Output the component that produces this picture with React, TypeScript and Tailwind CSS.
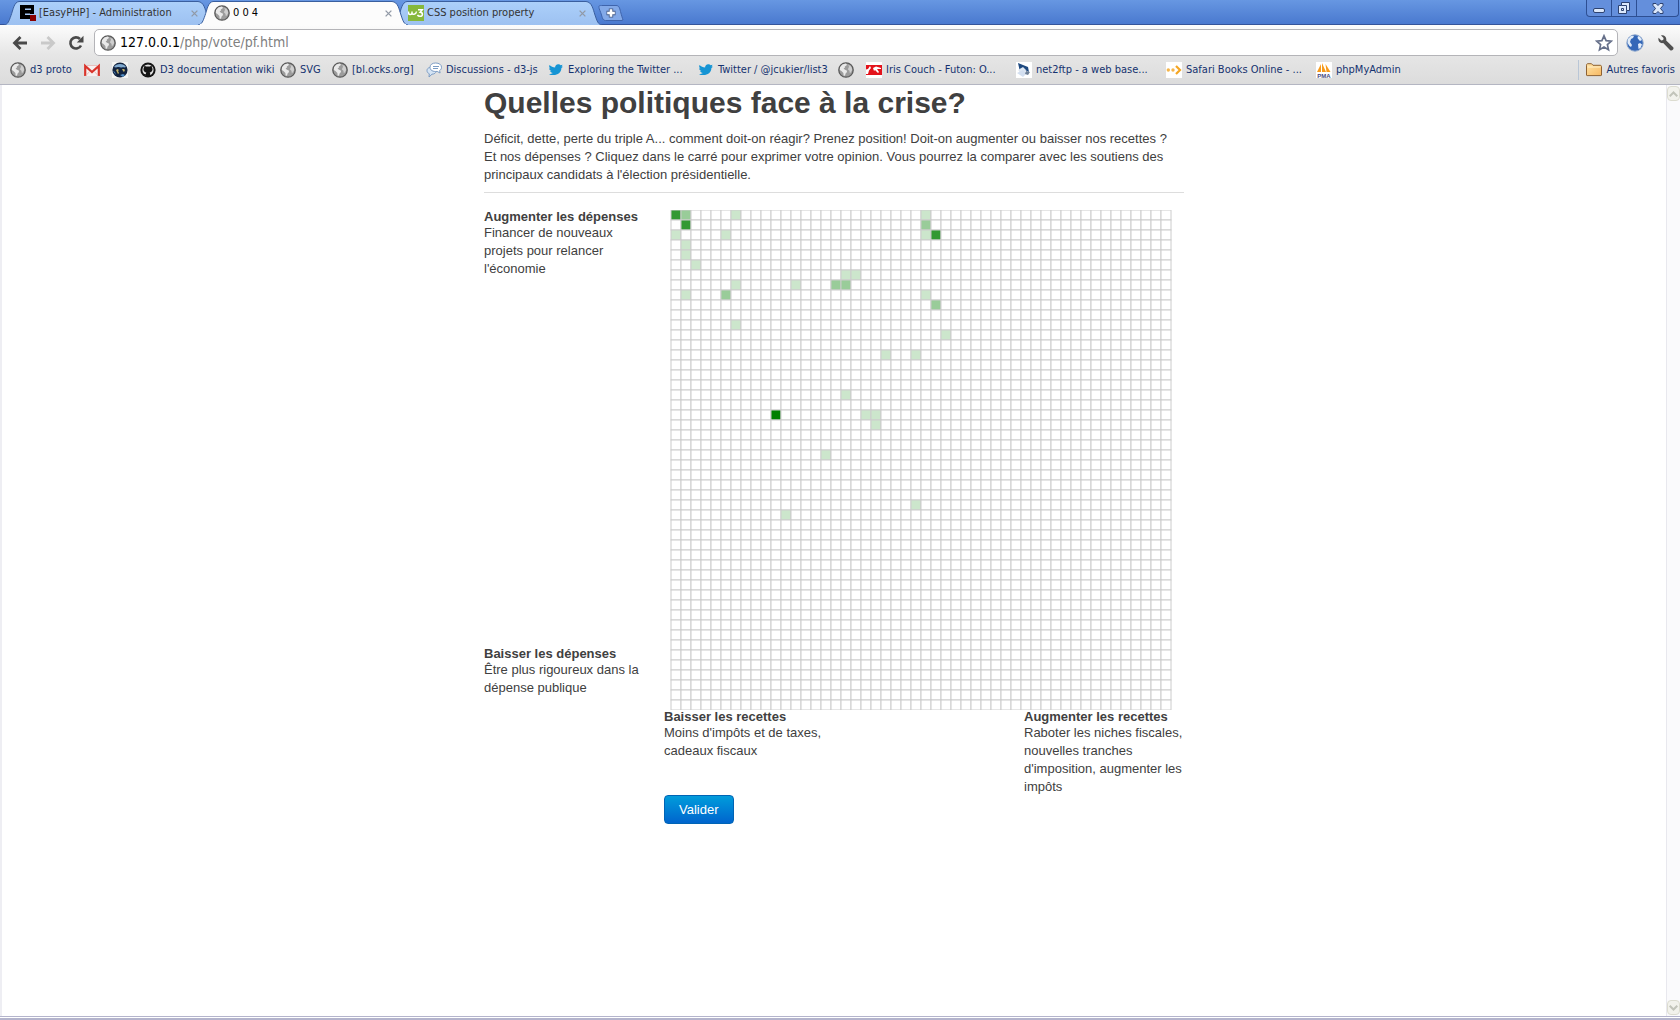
import React from "react";

const uiFont = "font-['DejaVu_Sans_Condensed','Noto_Sans',sans-serif]";

/* ---------- icons ---------- */

function Globe() {
  return (
    <svg viewBox="0 0 16 16" className="size-4 shrink-0" aria-hidden="true">
      <circle cx="8" cy="8" r="7.2" fill="#9c9c9c" stroke="#5a5a5a" strokeWidth="1.3" />
      <path d="M2 5.200 4.400 2.400 7.600 1.600 9 2.400 8.400 3.600 6.800 4.400 7 5.600 5.600 6.600 7 7.800 8.800 8.600 9 10 7.600 11.600 7 13.800 5.600 13.400 5.400 11 3.400 9 1.800 8z" fill="#e9e9e9" />
      <path d="M10.200 3.200 12.200 3.600 13.800 5.800 14.200 8 12.800 10.600 11.800 11 11.400 8.800 10 7.600 10.400 5.800 11.200 5z" fill="#cfcfcf" />
    </svg>
  );
}

function EasyPhpIcon() {
  return (
    <svg viewBox="0 0 16 16" className="size-4 shrink-0" aria-hidden="true">
      <path d="M0 0h14v9H5v1h5v4H0z" fill="#000" />
      <path d="M5 3.500h6v1.500H5zM5 8.500h5v1.500H5z" fill="#a5c8f5" />
      <rect x="10" y="10" width="6" height="6" fill="#8a0000" />
    </svg>
  );
}

function W3Icon() {
  return (
    <svg viewBox="0 0 16 16" className="size-4 shrink-0" aria-hidden="true">
      <rect width="16" height="16" fill="#86b83c" />
      <path d="M.5 6.500V8c0 2 3.500 2 3.500 0V6.500M4 8c0 2 4 2 4.500-1.500" fill="none" stroke="#fff" strokeWidth="1.500" />
      <path d="M10 4.700h4.200l-2 2.600c3 .2 3 4.200-.3 4-1.200 0-2-.6-2.400-1.400" fill="none" stroke="#fff" strokeWidth="1.600" />
    </svg>
  );
}

function GmailIcon() {
  return (
    <svg viewBox="0 0 16 16" className="size-4 shrink-0" aria-hidden="true">
      <rect x="0" y="3" width="16" height="11" fill="#f6f0f0" />
      <path d="M1.2 14V4L8 10l6.800-6v10" fill="none" stroke="#d9342b" strokeWidth="2.200" />
      <path d="M2 13.500 6 9M14 13.500 10 9M2 3.500h12" stroke="#e4b3b0" strokeWidth=".8" />
    </svg>
  );
}

function EarthIcon() {
  return (
    <svg viewBox="0 0 16 16" className="size-4 shrink-0" aria-hidden="true">
      <rect width="16" height="16" fill="#f4f4f2" />
      <circle cx="8" cy="8" r="7.600" fill="#12233f" />
      <path d="M2 5c2-4 10-4 12 0-1 1-3 0-4 .5S6 4 4 5.500z" fill="#7fa9cf" />
      <path d="M4 8l1.500-1L7 8l-1 1 1 2-1 1-1-2zM10 7l2 0 1 1-1 2-1-1z" fill="#c1b26a" />
      <path d="M1 9l2 1 1 3zM8 13l3-1 2 1-2 2z" fill="#4f8cc4" />
    </svg>
  );
}

function GithubIcon() {
  return (
    <svg viewBox="0 0 16 16" className="size-4 shrink-0" aria-hidden="true">
      <circle cx="8" cy="8" r="7.600" fill="#151515" />
      <circle cx="8" cy="8" r="5.600" fill="#e2e2e2" />
      <path d="M4.400 3.600 6 4.600h4l1.600-1 .4 2c1.200 2 .3 4.500-2.300 4.900.4.500.5 1 .5 1.700V15H5.900v-2c-1.500.2-2-.4-2.500-1.300 1 0 1.500.8 2.500.3 0-.6.100-1 .4-1.500C3.700 10.100 2.800 7.600 4 5.600z" fill="#151515" />
    </svg>
  );
}

function ChatIcon() {
  return (
    <svg viewBox="0 0 16 16" className="size-4 shrink-0" aria-hidden="true">
      <path d="M1 8.500c0-3 4-4 7-2.500s3 6-2 6.200L3 15l.3-3.200C1.800 11 1 10 1 8.500z" fill="#d5e4f4" stroke="#7c9cc4" />
      <path d="M4 5.300C4 2.500 6.500 1 9.700 1c3.300 0 5.800 1.600 5.800 4.300 0 1.600-.7 2.500-1.900 3.200l.5 2.500-3-1.600C7 9.900 4 8.300 4 5.300z" fill="#fff" stroke="#7c9cc4" />
      <path d="M7 4.500h6M7 6.500h5" stroke="#7c9cc4" />
    </svg>
  );
}

function TwitterIcon() {
  return (
    <svg viewBox="0 0 16 16" className="size-4 shrink-0" aria-hidden="true">
      <path d="M1.500 3c1.600 1.600 3.400 2.400 5.600 2.500C7 3.300 8.700 2 10.500 2.200c1 .1 1.600.5 2.100 1l2-.4-1 1.600 1.400.3-1.600 1.400C13.300 11 9.500 13.300 5 13.100c-1.600 0-3-.4-4-1.200 1.600 0 2.800-.3 3.800-1-1.400-.2-2.300-1-2.600-2l1.200-.1C2 8.500 1.200 7.600 1.200 6.300l1.200.3C1.200 5.600.9 4.300 1.500 3z" fill="#1594d4" />
    </svg>
  );
}

function CouchIcon() {
  return (
    <svg viewBox="0 0 16 16" className="size-4 shrink-0" aria-hidden="true">
      <rect width="16" height="16" fill="#fff" />
      <path d="M0 3h16v10H0z" fill="#e3131b" />
      <path d="M0 7.500 2 7 4 4 5 6 3 8.500 2 12 0 12zM7 6l3-1.500 5 1.500v1l-4 0L13 10l-1 1-3-3-1 1z" fill="#fff" />
    </svg>
  );
}

function FtpIcon() {
  return (
    <svg viewBox="0 0 16 16" className="size-4 shrink-0" aria-hidden="true">
      <rect width="16" height="16" fill="#fff" />
      <path d="M2 1 12 5l1 5-4-2-5 2z" fill="#1f4a80" />
      <path d="M2 8l5-3 3 3-5 3z" fill="#dfe8f3" />
      <path d="M1 11l6-3 4 3-4 4z" fill="#d3dff0" />
      <path d="M10 9l4 1-2 3-3-1z" fill="#6f8198" />
    </svg>
  );
}

function SafariIcon() {
  return (
    <svg viewBox="0 0 16 16" className="size-4 shrink-0" aria-hidden="true">
      <rect width="16" height="16" fill="#fff" />
      <circle cx="2.300" cy="8" r="1.700" fill="#f5b54a" />
      <circle cx="7" cy="8" r="1.700" fill="#f5b54a" />
      <path d="m10 4 4 4-4 4" fill="none" stroke="#f5a623" strokeWidth="2.200" />
    </svg>
  );
}

function PmaIcon() {
  return (
    <svg viewBox="0 0 16 16" className="size-4 shrink-0" aria-hidden="true">
      <rect width="16" height="16" fill="#fff" />
      <path d="M1 10 5 2v8zM6 10V1l4 9zM10.500 10 9.500 2l5 8z" fill="#f79a1a" />
      <text x="8" y="15.500" textAnchor="middle" fontSize="6" fontWeight="bold" fontFamily="Liberation Sans" fill="#47477d">PMA</text>
    </svg>
  );
}

function FolderIcon() {
  return (
    <svg viewBox="0 0 16 16" className="size-4 shrink-0" aria-hidden="true">
      <defs>
        <linearGradient id="folder" x1="0" y1="0" x2="1" y2="1">
          <stop offset="0" stopColor="#ffe3a6" />
          <stop offset="1" stopColor="#f6b862" />
        </linearGradient>
      </defs>
      <path d="M.5 13V3.200C.5 2.200 1 1.700 2 1.700h3.500l1.500 1.600h7c1 0 1.500.4 1.500 1.300V13c0 .4-.2.600-.6.600H1.100c-.4 0-.6-.2-.6-.6z" fill="url(#folder)" stroke="#8e6233" />
      <path d="M1.500 5h13" stroke="#fff0c9" />
    </svg>
  );
}

function BlueGlobe() {
  return (
    <svg viewBox="0 0 18 18" className="size-[18px]" aria-hidden="true">
      <circle cx="9" cy="9" r="8.200" fill="#3467b8" stroke="#8fa8cc" />
      <path d="M2 5 5 2 8 2 7 4 5 5 4 8 6 11 5 13 3.500 12 1.500 9z" fill="#dfeaf8" />
      <path d="M12 2 14 3 16 6 14 7 13 6 11.500 4zM12 10l2-1 2 1.500-1.500 3.500-2 1z" fill="#e3edfa" />
    </svg>
  );
}

/* ---------- browser frame ---------- */

function TabShape({ active }: { active: boolean }) {
  return (
    <svg viewBox="0 0 210 24" preserveAspectRatio="none" className="absolute inset-0 h-full w-full" aria-hidden="true">
      <defs>
        <linearGradient id="tabBlue" x1="0" y1="0" x2="0" y2="1">
          <stop offset="0" stopColor="#acd0fa" />
          <stop offset="1" stopColor="#9dc1f1" />
        </linearGradient>
      </defs>
      <path
        d="M0 24C4 23.500 5 20 7 14.500S10 1 15 .5H194C200 1 201 8 203 14S206 23.500 210 24"
        fill={active ? "#fcfcfc" : "url(#tabBlue)"}
        stroke="#3a5f9f"
      />
      {active && <path d="M2 24h206" stroke="#fcfcfc" strokeWidth="2" />}
    </svg>
  );
}

function Tab({ icon, title, active = false }: { icon: React.ReactNode; title: string; active?: boolean }) {
  return (
    <div className={active ? "relative z-10 -mr-4 h-6 w-[210px]" : "relative -mr-4 h-6 w-[210px]"}>
      <TabShape active={active} />
      <div className="relative flex h-6 items-center pr-3 pl-4">
        <button className={active ? "flex flex-1 items-center gap-[3px] text-black" : "flex flex-1 items-center gap-[3px] text-[#333]"}>
          {icon}
          <span className="whitespace-nowrap">{title}</span>
        </button>
        <button aria-label="Fermer l'onglet" className="flex size-4 items-center justify-center">
          <svg viewBox="0 0 8 8" className="size-[7px]" aria-hidden="true">
            <path d="m.7.700 6.600 6.600M7.300.700.700 7.300" stroke="#9199a6" strokeWidth="1.500" />
          </svg>
        </button>
      </div>
    </div>
  );
}

function TitleBar() {
  return (
    <div className="flex h-[25px] items-start border-b border-[#34549a] bg-linear-to-b from-[#6797e2] to-[#4a79cf] pl-1">
      <div className="flex pt-px">
        <Tab icon={<EasyPhpIcon />} title="[EasyPHP] - Administration" />
        <Tab icon={<Globe />} title="0 0 4" active />
        <Tab icon={<W3Icon />} title="CSS position property" />
      </div>
      <button aria-label="Nouvel onglet" className="mt-[5px] ml-3">
        <svg viewBox="0 0 26 16" className="h-4 w-[26px]" aria-hidden="true">
          <path d="M3.500.5H18c3 0 3.500 2 4.500 6s2 7 2.500 8.500c-.5.500-1 .5-2 .5H7.500c-2.500 0-3-2-4-5.500S1 4 1 2.500.5.500 3.500.5z" fill="#83a9e8" stroke="#3f64ac" />
          <path d="M8.500 8h9M13 3.500v9" stroke="#465c88" strokeWidth="4.400" />
          <path d="M9.200 8h7.600M13 4.200v7.600" stroke="#fff" strokeWidth="2.600" />
        </svg>
      </button>
      <div className="mr-px ml-auto flex h-[17px] divide-x divide-[#2d4f93] rounded-b border border-t-0 border-[#2d4f93] bg-[#648fdc]">
        <button aria-label="Réduire" className="flex w-[25px] items-center justify-center">
          <svg viewBox="0 0 12 12" className="size-3" aria-hidden="true">
            <rect x=".5" y="6.500" width="11" height="4" rx="1.500" fill="#dce8fb" stroke="#2d4270" />
          </svg>
        </button>
        <button aria-label="Restaurer" className="flex w-[25px] items-center justify-center">
          <svg viewBox="0 0 14 14" className="size-[14px]" aria-hidden="true">
            <path d="M4.500 1.500h8v8h-3v3h-8v-8h3z" fill="#dce8fb" stroke="#2d4270" />
            <path d="M4.500 4.500h5v5M4.500 7.500h2v2h-2z" fill="none" stroke="#2d4270" />
          </svg>
        </button>
        <button aria-label="Fermer" className="flex w-[41px] items-center justify-center">
          <svg viewBox="0 0 12 11" className="h-[11px] w-3" aria-hidden="true">
            <path d="M1 .5h3l2 2 2-2h3v2L8.500 5.500 11 8.500v2H8l-2-2-2 2H1v-2l2.500-3L1 2.500z" fill="#dce8fb" stroke="#2d4270" />
          </svg>
        </button>
      </div>
    </div>
  );
}

function AddressBar() {
  return (
    <div className="flex h-[34px] items-center pt-px pl-3">
      <button aria-label="Précédent" className="w-7">
        <svg viewBox="0 0 16 16" className="size-4" aria-hidden="true">
          <path d="M15 8H3M8.500 2 2.500 8l6 6" fill="none" stroke="#4a4a4a" strokeWidth="2.800" />
        </svg>
      </button>
      <button aria-label="Suivant" className="w-7">
        <svg viewBox="0 0 16 16" className="size-4" aria-hidden="true">
          <path d="M1 8h12M7.500 2l6 6-6 6" fill="none" stroke="#c9c9c9" strokeWidth="2.800" />
        </svg>
      </button>
      <button aria-label="Actualiser" className="w-[26px]">
        <svg viewBox="0 0 16 16" className="size-4" aria-hidden="true">
          <path d="M13 10.500A5.600 5.600 0 1 1 12 4" fill="none" stroke="#4a4a4a" strokeWidth="2.600" />
          <path d="M15.500.8v6.700H8.800z" fill="#4a4a4a" />
        </svg>
      </button>
      <div className="flex h-[27px] flex-1 items-center rounded-[5px] border border-[#b4b4b8] bg-white pr-1 pl-[5px]">
        <Globe />
        <label htmlFor="url" className="ml-1 text-[14px] text-black">127.0.0.1</label>
        <input id="url" defaultValue="/php/vote/pf.html" className="flex-1 bg-transparent text-[14px] text-[#808080] outline-none" />
        <button aria-label="Ajouter aux favoris">
          <svg viewBox="0 0 18 18" className="size-[18px]" aria-hidden="true">
            <path d="m9 1.800 2.100 4.800 5.200.5-3.900 3.500 1.100 5.200L9 13.100l-4.500 2.700 1.100-5.200L1.700 7.100l5.200-.5z" fill="#fff" stroke="#66708a" strokeWidth="1.700" />
          </svg>
        </button>
      </div>
      <button aria-label="Extension" className="ml-2 w-8">
        <BlueGlobe />
      </button>
      <button aria-label="Outils" className="w-[22px]">
        <svg viewBox="0 0 16 16" className="size-4" aria-hidden="true">
          <path d="M3 .5 5.600 3 5.200 5 3.200 5.400.6 2.800C-.4 6 2 8.800 5.200 8l7 7.200c1.900 1.200 4.200-1.100 3-3L8.200 5.500C8.900 2.300 6.300-.4 3 .5z" fill="#505050" />
        </svg>
      </button>
    </div>
  );
}

const bookmarks: { icon: React.ReactNode; label: string; name?: string; width: string }[] = [
  { icon: <Globe />, label: "d3 proto", width: "w-[74px]" },
  { icon: <GmailIcon />, label: "", name: "Gmail", width: "w-7" },
  { icon: <EarthIcon />, label: "", name: "Terre", width: "w-7" },
  { icon: <GithubIcon />, label: "D3 documentation wiki", width: "w-[140px]" },
  { icon: <Globe />, label: "SVG", width: "w-[52px]" },
  { icon: <Globe />, label: "[bl.ocks.org]", width: "w-[94px]" },
  { icon: <ChatIcon />, label: "Discussions - d3-js", width: "w-[122px]" },
  { icon: <TwitterIcon />, label: "Exploring the Twitter ...", width: "w-[150px]" },
  { icon: <TwitterIcon />, label: "Twitter / @jcukier/list3", width: "w-[140px]" },
  { icon: <Globe />, label: "", name: "Page", width: "w-7" },
  { icon: <CouchIcon />, label: "Iris Couch - Futon: O...", width: "w-[150px]" },
  { icon: <FtpIcon />, label: "net2ftp - a web base...", width: "w-[150px]" },
  { icon: <SafariIcon />, label: "Safari Books Online - ...", width: "w-[150px]" },
  { icon: <PmaIcon />, label: "phpMyAdmin", width: "w-[120px]" },
];

function BookmarksBar() {
  return (
    <nav className="flex h-[25px] items-center pb-[3px] pl-[10px] text-[#15326f]">
      {bookmarks.map((b, i) => (
        <a key={i} href="#" aria-label={b.label || b.name} className={`flex shrink-0 items-center gap-1 whitespace-nowrap ${b.width}`}>
          {b.icon}
          {b.label && <span>{b.label}</span>}
        </a>
      ))}
      <a href="#" className="mr-[5px] ml-auto flex h-5 items-center gap-1 border-l border-[#b9c6d6] pl-[7px] whitespace-nowrap">
        <FolderIcon />
        <span>Autres favoris</span>
      </a>
    </nav>
  );
}

function ScrollArrow({ down = false }: { down?: boolean }) {
  return (
    <button aria-label={down ? "Défiler vers le bas" : "Défiler vers le haut"} className="flex h-[15px] w-[13px] items-center justify-center rounded-sm border border-[#dcdcd0] bg-[#f2f2ec]">
      <svg viewBox="0 0 9 6" className="h-[6px] w-[9px]" aria-hidden="true">
        <path d={down ? "m.7.700 3.800 3.800L8.300.700" : "m.7 5.300 3.800-3.800 3.800 3.800"} fill="none" stroke="#c2c4ba" strokeWidth="2" />
      </svg>
    </button>
  );
}

/* ---------- opinion grid ---------- */

const SIZE = 50;
const CELL = 10;
const shades = ["#ffffff", "#cce6cc", "#99cc99", "#339933", "#008000"];

// column, row, shade
const votes: [number, number, number][] = [
  [0, 0, 3], [1, 0, 2], [6, 0, 1], [25, 0, 1],
  [1, 1, 3], [25, 1, 2],
  [0, 2, 1], [5, 2, 1], [25, 2, 1], [26, 2, 3],
  [1, 3, 1], [1, 4, 1], [2, 5, 1],
  [17, 6, 1], [18, 6, 1],
  [6, 7, 1], [12, 7, 1], [16, 7, 2], [17, 7, 2],
  [1, 8, 1], [5, 8, 2], [25, 8, 1],
  [26, 9, 2], [6, 11, 1], [27, 12, 1],
  [21, 14, 1], [24, 14, 1], [17, 18, 1],
  [10, 20, 4], [19, 20, 1], [20, 20, 1], [20, 21, 1],
  [15, 24, 1], [24, 29, 1], [11, 30, 1],
];

const shadeAt = new Map(votes.map(([c, r, s]) => [r * SIZE + c, s]));

function VoteGrid() {
  return (
    <svg viewBox="-1 0 502 500" width="502" height="500" className="ml-[6px] block cursor-pointer" role="img" aria-label="Répartition des opinions">
      {Array.from({ length: SIZE * SIZE }, (_, i) => (
        <rect
          key={i}
          x={(i % SIZE) * CELL}
          y={Math.floor(i / SIZE) * CELL}
          width={CELL}
          height={CELL}
          fill={shades[shadeAt.get(i) ?? 0]}
          stroke="#ccc"
        />
      ))}
    </svg>
  );
}

function AxisLabel({ title, children }: { title: string; children: React.ReactNode }) {
  return (
    <section className="w-40">
      <h2 className="text-[13px] leading-[14px] font-bold whitespace-nowrap">{title}</h2>
      <p>{children}</p>
    </section>
  );
}

export default function App() {
  return (
    <div className="flex min-h-screen flex-col bg-white">
      <header className={`text-[11px] ${uiFont}`}>
        <TitleBar />
        <div className="border-b border-[#b4b6c2] bg-linear-to-b from-[#fcfcfc] via-[#e6e6e6] to-[#dcdcdc]">
          <AddressBar />
          <BookmarksBar />
        </div>
      </header>

      <div className="flex flex-1 border-l-2 border-[#eeeef3]">
        <main className="flex-1 font-['Liberation_Sans',Arial,sans-serif] text-[13px] leading-[18px] text-[#404040]">
          <div className="mx-auto w-[700px]">
            <h1 className="text-[30px] leading-9 font-bold">Quelles politiques face à la crise?</h1>
            <p className="mt-[9px] border-b border-[#ddd] pb-2">
              Déficit, dette, perte du triple A... comment doit-on réagir? Prenez position! Doit-on augmenter ou baisser nos recettes ?
              <br />
              Et nos dépenses ? Cliquez dans le carré pour exprimer votre opinion. Vous pourrez la comparer avec les soutiens des
              <br />
              principaux candidats à l'élection présidentielle.
            </p>
            <div className="mt-[17px] flex">
              <div className="flex w-[180px] flex-col justify-between pb-[13px]">
                <AxisLabel title="Augmenter les dépenses">Financer de nouveaux projets pour relancer l'économie</AxisLabel>
                <AxisLabel title="Baisser les dépenses">Être plus rigoureux dans la dépense publique</AxisLabel>
              </div>
              <VoteGrid />
            </div>
            <div className="ml-[180px] flex justify-between">
              <AxisLabel title="Baisser les recettes">Moins d'impôts et de taxes, cadeaux fiscaux</AxisLabel>
              <AxisLabel title="Augmenter les recettes">
                Raboter les niches fiscales, nouvelles tranches d'imposition, augmenter les impôts
              </AxisLabel>
            </div>
            <button className="-mt-px ml-[180px] h-[29px] rounded border border-[#0064b5] bg-linear-to-b from-[#049cdb] to-[#0064cd] px-[14px] text-white">
              Valider
            </button>
          </div>
        </main>
        <div className="flex w-[14px] flex-col justify-between border-l border-[#e8e8ee] bg-[#fafafc] py-px">
          <ScrollArrow />
          <ScrollArrow down />
        </div>
      </div>
      <footer className="h-1 border-t border-b-2 border-t-[#b4b4cc] border-b-[#b4b4cc]" />
    </div>
  );
}
